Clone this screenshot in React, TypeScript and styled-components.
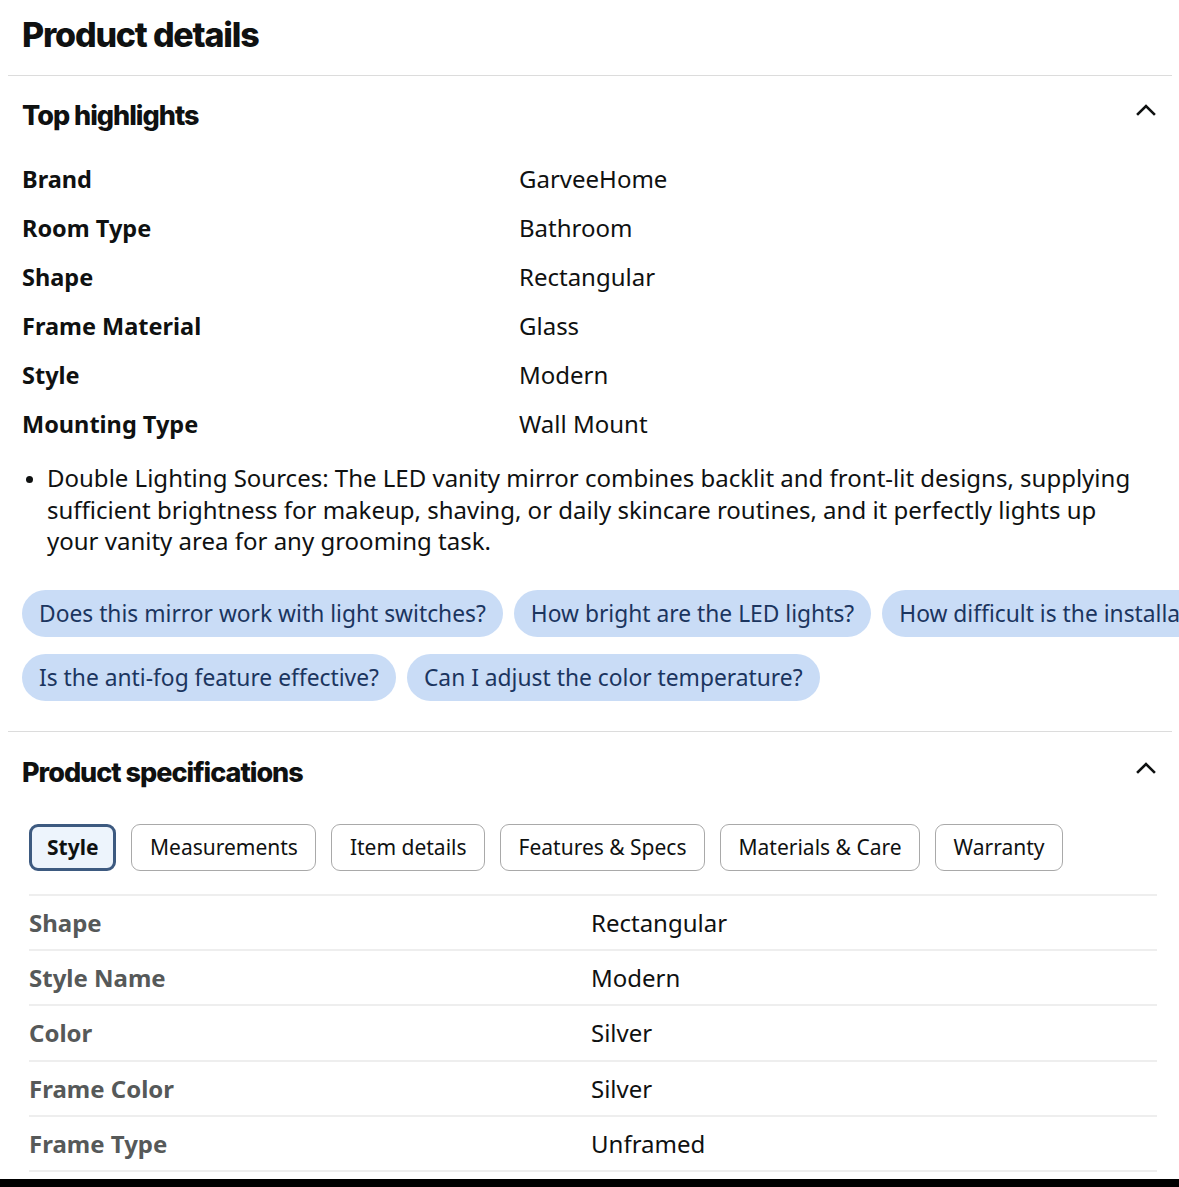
import styled, { createGlobalStyle } from 'styled-components';

const GlobalStyle = createGlobalStyle`
    html, body {
        margin: 0;
        padding: 0;
        background: #ffffff;
    }
    body {
        font-family: "Noto Sans", "Open Sans", Arial, sans-serif;
        color: #0f1111;
    }
`

const Page = styled.div`
    width: 1179px;
    height: 1187px;
    overflow: hidden;
    display: flex;
    flex-direction: column;
    padding: 0 7px 0 8px;
    box-sizing: border-box;
`

const Header = styled.header`
    height: 75px;
    display: flex;
    align-items: center;
    padding: 0 14px;
    border-bottom: 1px solid #dcdcdc;
    box-sizing: content-box;
`

const PageTitle = styled.h1`
    font-family: Inter, "Noto Sans", sans-serif;
    font-weight: 800;
    font-size: 34px;
    letter-spacing: -1.2px;
    margin: -6px 0 0;
`

const Section = styled.section<{ $divider?: boolean }>`
    display: flex;
    flex-direction: column;
    padding: 0 15px 0 14px;
    border-bottom: ${p => (p.$divider ? '1px solid #dcdcdc' : 'none')};
`

const SectionHead = styled.div<{ $height: number }>`
    height: ${p => p.$height}px;
    display: flex;
    align-items: center;
    justify-content: space-between;
`

const SectionTitle = styled.h2`
    font-family: Inter, "Noto Sans", sans-serif;
    font-weight: 800;
    font-size: 27px;
    letter-spacing: -1px;
    margin: 0;
`

const Chevron = styled.svg`
    width: 22px;
    height: 22px;
    margin-top: -10px;
`

const HighlightRow = styled.div`
    display: grid;
    grid-template-columns: 497px 1fr;
    height: 49px;
    align-items: center;
    font-size: 24px;
`

const HighlightLabel = styled.span`
    font-weight: 700;
    font-size: 23.5px;
`

const HighlightValue = styled.span`
    font-weight: 400;
`

const Bullets = styled.ul`
    margin: 14px 0 0;
    padding: 0 20px 0 25px;
    font-size: 24px;
    line-height: 31.5px;
    li::marker {
        font-size: 20px;
    }
`

const ChipScroller = styled.div`
    margin: 33px -22px 0 0;
    overflow: hidden;
    display: flex;
    flex-direction: column;
    gap: 17px;
    padding-bottom: 30px;
`

const ChipRow = styled.div`
    display: flex;
    gap: 11px;
    white-space: nowrap;
`

const Chip = styled.button`
    flex: none;
    height: 47px;
    padding: 0 17px;
    border: none;
    border-radius: 24px;
    background: #c9dcf6;
    color: #1b355f;
    font-family: "Noto Sans", sans-serif;
    font-size: 22.8px;
`

const Tabs = styled.div`
    display: flex;
    gap: 15px;
    padding: 0 0 0 7px;
    margin-top: 10px;
`

const Tab = styled.button<{ $active?: boolean }>`
    height: 47px;
    padding: 0 ${p => (p.$active ? '15px' : '17.5px')};
    border-radius: 9px;
    border: ${p => (p.$active ? '3px solid #3d5a80' : '1px solid #a9a9a9')};
    background: ${p => (p.$active ? '#edf4fc' : '#ffffff')};
    color: #0f1111;
    font-family: "Noto Sans", sans-serif;
    font-size: 21px;
    font-weight: ${p => (p.$active ? 700 : 400)};
    box-sizing: border-box;
`

const SpecTable = styled.div`
    margin: 23px 0 0 7px;
    border-top: 2px solid #eeeeee;
`

const SpecRow = styled.div`
    display: grid;
    grid-template-columns: 562px 1fr;
    height: 55.4px;
    align-items: center;
    border-bottom: 2px solid #eeeeee;
    box-sizing: border-box;
    font-size: 24px;
`

const SpecLabel = styled.span`
    font-weight: 700;
    color: #565959;
`

const SpecValue = styled.span`
    color: #0f1111;
`

const BottomBar = styled.div`
    margin: auto -7px 0 -8px;
    height: 8px;
    background: #000000;
    flex: none;
`

const highlights = [
    ['Brand', 'GarveeHome'],
    ['Room Type', 'Bathroom'],
    ['Shape', 'Rectangular'],
    ['Frame Material', 'Glass'],
    ['Style', 'Modern'],
    ['Mounting Type', 'Wall Mount'],
]

const chipRows = [
    ['Does this mirror work with light switches?', 'How bright are the LED lights?', 'How difficult is the installation process?'],
    ['Is the anti-fog feature effective?', 'Can I adjust the color temperature?'],
]

const tabs = ['Style', 'Measurements', 'Item details', 'Features & Specs', 'Materials & Care', 'Warranty']

const specs = [
    ['Shape', 'Rectangular'],
    ['Style Name', 'Modern'],
    ['Color', 'Silver'],
    ['Frame Color', 'Silver'],
    ['Frame Type', 'Unframed'],
]

const ChevronUp = () => (
    <Chevron viewBox="0 0 22 22" fill="none" stroke="#0f1111" strokeWidth="2.6" strokeLinecap="square">
        <path d="M3 15 L11 7 L19 15" />
    </Chevron>
)

const App = () => (
    <Page>
        <GlobalStyle />
        <Header>
            <PageTitle>Product details</PageTitle>
        </Header>

        <Section $divider>
            <SectionHead $height={78}>
                <SectionTitle>Top highlights</SectionTitle>
                <ChevronUp />
            </SectionHead>
            {highlights.map(([label, value]) => (
                <HighlightRow key={label}>
                    <HighlightLabel>{label}</HighlightLabel>
                    <HighlightValue>{value}</HighlightValue>
                </HighlightRow>
            ))}
            <Bullets>
                <li>
                    Double Lighting Sources: The LED vanity mirror combines backlit and front-lit designs, supplying
                    sufficient brightness for makeup, shaving, or daily skincare routines, and it perfectly lights up
                    your vanity area for any grooming task.
                </li>
            </Bullets>
            <ChipScroller>
                {chipRows.map((row, i) => (
                    <ChipRow key={i}>
                        {row.map(q => (
                            <Chip key={q}>{q}</Chip>
                        ))}
                    </ChipRow>
                ))}
            </ChipScroller>
        </Section>

        <Section>
            <SectionHead $height={82}>
                <SectionTitle>Product specifications</SectionTitle>
                <ChevronUp />
            </SectionHead>
            <Tabs>
                {tabs.map(t => (
                    <Tab key={t} $active={t === 'Style'}>{t}</Tab>
                ))}
            </Tabs>
            <SpecTable>
                {specs.map(([label, value]) => (
                    <SpecRow key={label}>
                        <SpecLabel>{label}</SpecLabel>
                        <SpecValue>{value}</SpecValue>
                    </SpecRow>
                ))}
            </SpecTable>
        </Section>

        <BottomBar />
    </Page>
)

export default App
